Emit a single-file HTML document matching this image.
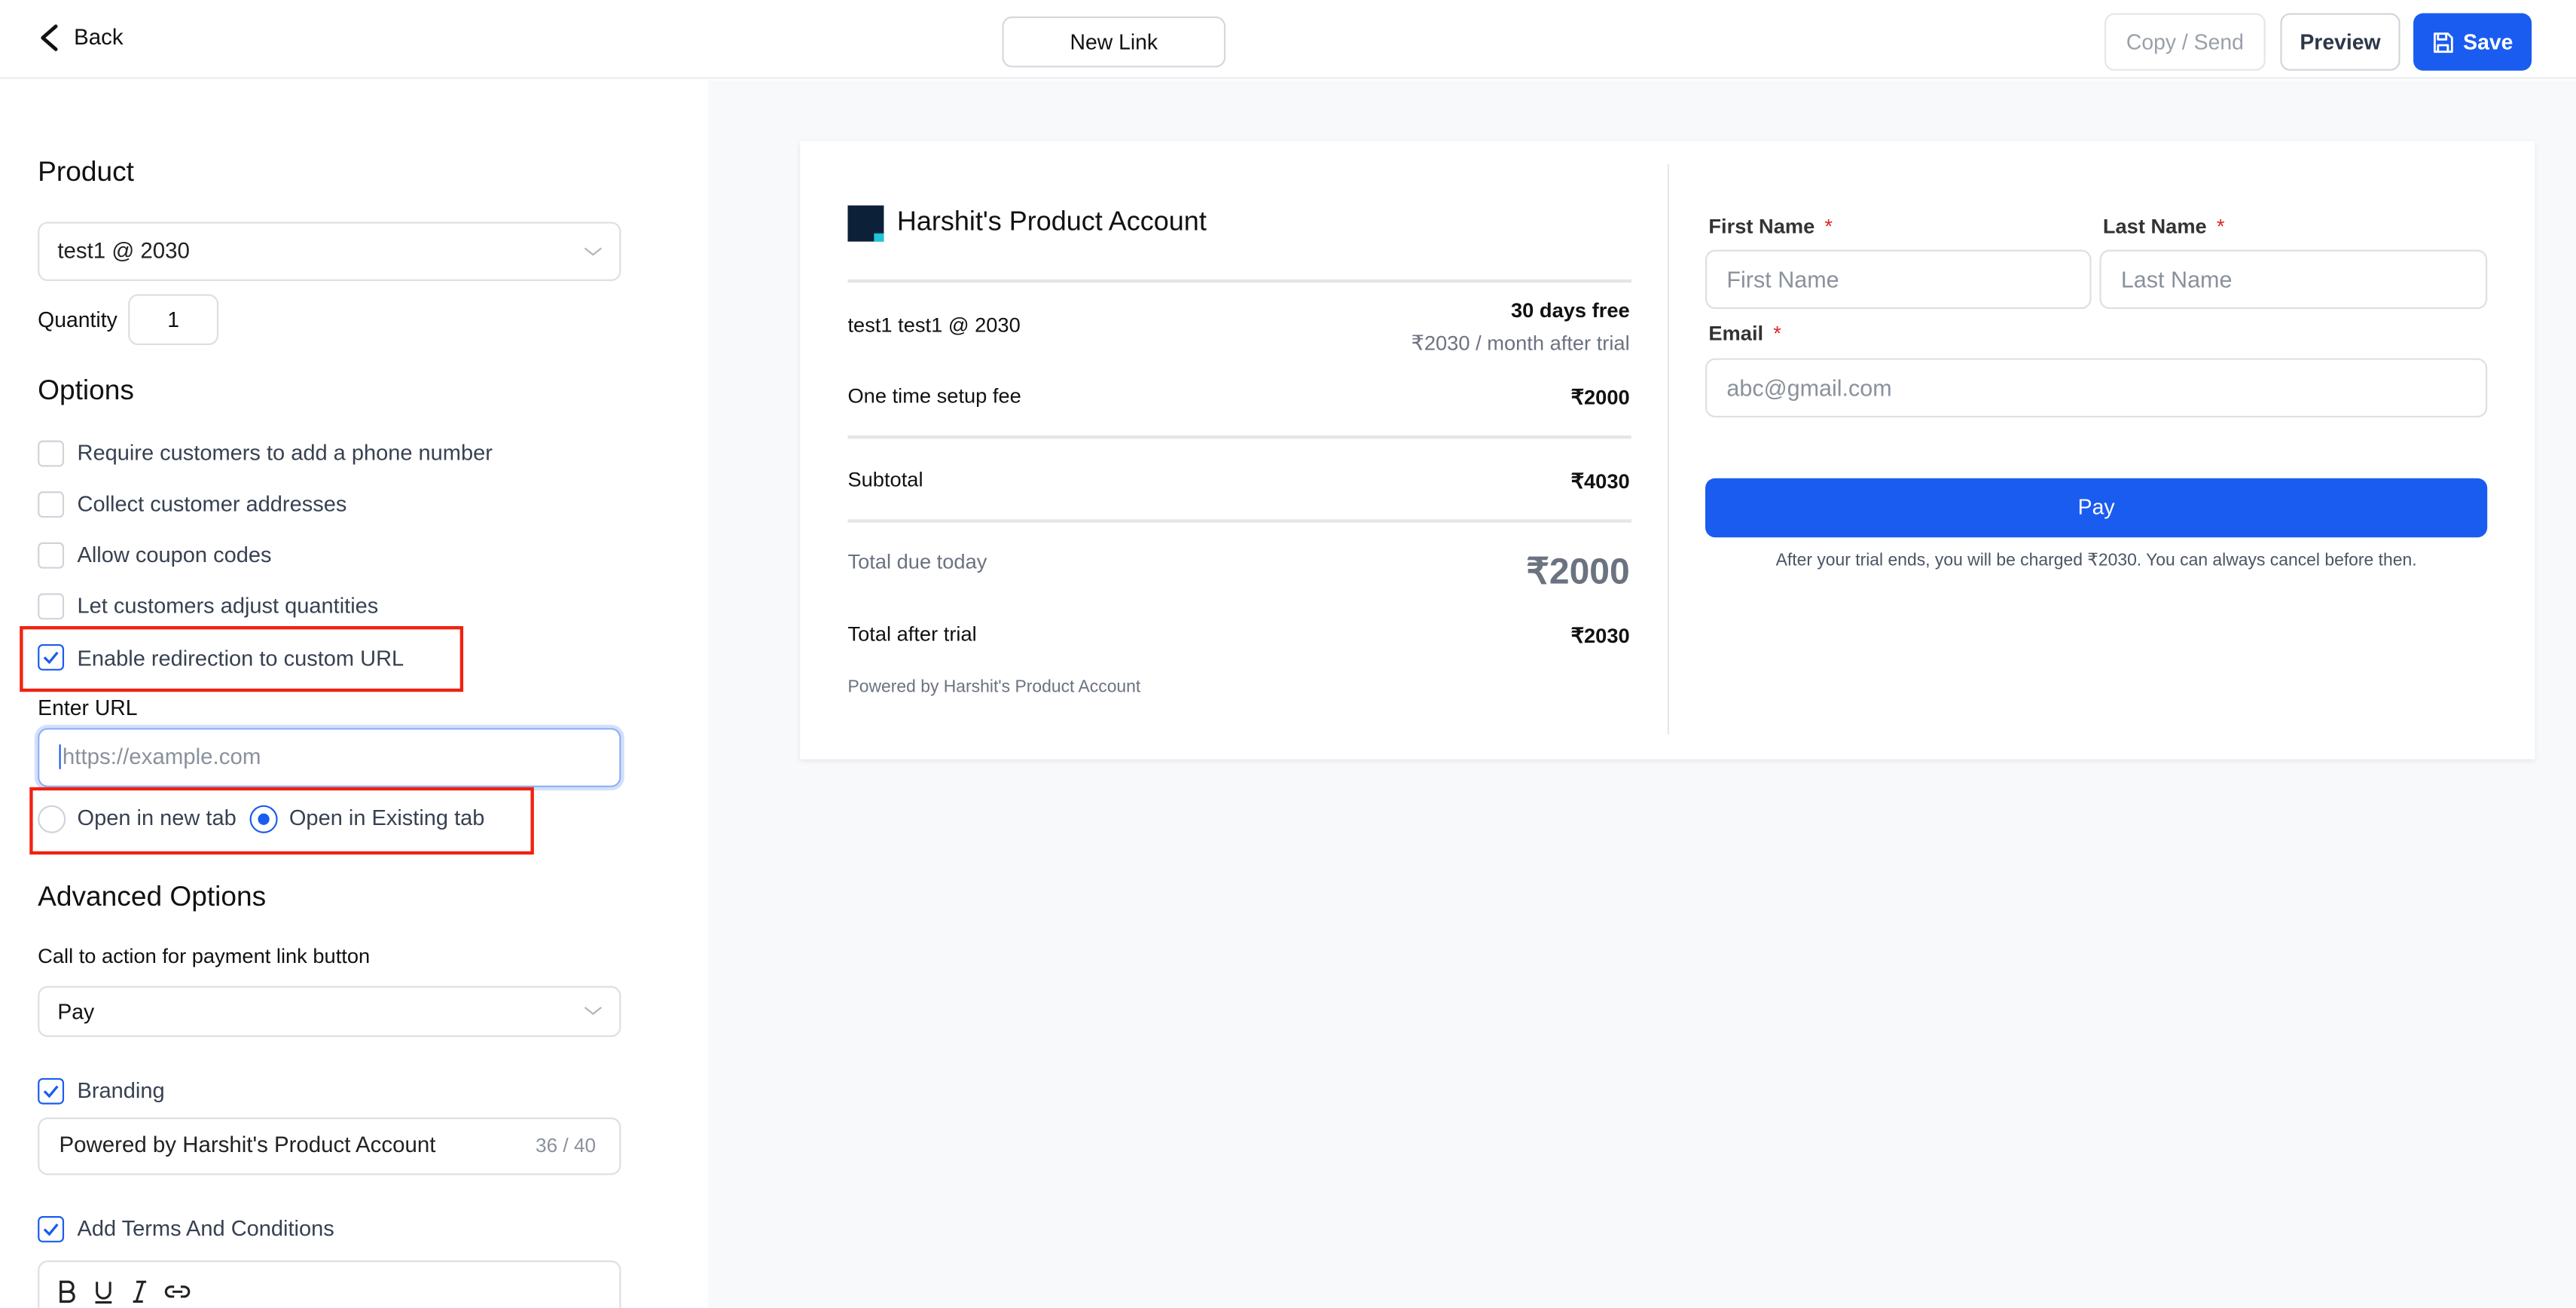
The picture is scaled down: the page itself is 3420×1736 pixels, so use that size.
<!DOCTYPE html>
<html><head><meta charset="utf-8"><style>
*{box-sizing:border-box;margin:0;padding:0}
html,body{width:3420px;height:1736px;overflow:hidden;background:#fff}
#w{position:absolute;left:0;top:0;width:1568px;height:796px;overflow:hidden;transform:scale(2.18112);transform-origin:0 0;font-family:"Liberation Sans",sans-serif;color:#111}
.a{position:absolute}
.top{left:0;top:0;width:1568px;height:48px;border-bottom:1px solid #e9ebef;background:#fff}
.btn{position:absolute;top:8px;height:35px;border-radius:6px;font-size:13px;display:flex;align-items:center;justify-content:center}
.right{left:431px;top:49px;width:1137px;height:747px;background:#f8f9fb}
.h{font-size:17px;color:#111}
.box{position:absolute;border:1px solid #dcdfe4;border-radius:6px;background:#fff}
.cb{position:absolute;left:23px;width:16px;height:16px;border:1px solid #cfd3da;border-radius:3px;background:#fff}
.cbc{border-color:#1a5cf0}
.lbl{position:absolute;left:47px;font-size:13.3px;color:#374151}
.red{position:absolute;border:2px solid #f0220f}
.card{left:487px;top:86px;width:1056px;height:376px;background:#fff;box-shadow:0 1px 3px rgba(0,0,0,.08)}
.t{position:absolute;font-size:12.5px;color:#111}
.r{text-align:right}
.ln{position:absolute;left:516px;width:477px;height:2px;background:#e3e5e9}
.fl{position:absolute;font-size:12.5px;font-weight:bold;color:#333}
.fl b{color:#e02424;font-weight:normal;margin-left:6px}
.in{position:absolute;height:36px;border:1px solid #dcdfe4;border-radius:6px;background:#fff;font-size:14px;color:#8a919c;padding-left:12px;line-height:34px}
</style></head><body><div id="w">
<div class="a top"></div>
<svg class="a" style="left:22px;top:14px" width="16" height="18" viewBox="0 0 16 18"><path d="M12 2 L4 9 L12 16" fill="none" stroke="#111" stroke-width="2.2" stroke-linecap="round" stroke-linejoin="round"/></svg>
<div class="a" style="left:45px;top:15px;font-size:13.5px">Back</div>
<div class="btn" style="left:610px;top:10px;width:136px;height:31px;border:1px solid #d5d8de;font-size:13px">New Link</div>
<div class="btn" style="left:1281px;width:98px;border:1px solid #e4e6ea;color:#9aa0a9">Copy / Send</div>
<div class="btn" style="left:1388px;width:73px;border:1px solid #d1d5db;color:#2d3748;font-weight:bold">Preview</div>
<div class="btn" style="left:1469px;width:72px;background:#1a5cf0;color:#fff;font-weight:bold"><svg width="14" height="14" viewBox="0 0 14 14" style="margin-right:5px"><path d="M2 1.5h8l2.5 2.5v8.5h-10.5z M4 1.5v3.5h5v-3.5 M4 12.5v-4h6v4" fill="none" stroke="#fff" stroke-width="1.3" stroke-linejoin="round"/></svg>Save</div>
<div class="a right"></div>

<div class="a h" style="left:23px;top:95px">Product</div>
<div class="box" style="left:23px;top:135px;width:355px;height:36px"></div>
<div class="a" style="left:35px;top:145px;font-size:13.5px;color:#222">test1 @ 2030</div>
<svg class="a" style="left:355px;top:149px" width="12" height="8"><path d="M1 2l5 4 5-4" fill="none" stroke="#b0b5bd" stroke-width="1"/></svg>
<div class="a" style="left:23px;top:187px;font-size:13px">Quantity</div>
<div class="box" style="left:78px;top:179px;width:55px;height:31px;text-align:center;line-height:29px;font-size:13px">1</div>
<div class="a h" style="left:23px;top:228px">Options</div>

<div class="cb" style="top:268px"></div><div class="lbl" style="top:268px">Require customers to add a phone number</div>
<div class="cb" style="top:299px"></div><div class="lbl" style="top:299px">Collect customer addresses</div>
<div class="cb" style="top:330px"></div><div class="lbl" style="top:330px">Allow coupon codes</div>
<div class="cb" style="top:361px"></div><div class="lbl" style="top:361px">Let customers adjust quantities</div>
<div class="cb cbc" style="top:392px"><svg width="14" height="14" style="position:absolute;left:0;top:0"><path d="M3 7l3 3 5-6" fill="none" stroke="#1a5cf0" stroke-width="1.5"/></svg></div><div class="lbl" style="top:393px">Enable redirection to custom URL</div>
<div class="red" style="left:12px;top:381px;width:270px;height:40px"></div>
<div class="a" style="left:23px;top:423px;font-size:13px">Enter URL</div>
<div class="a" style="left:21px;top:441px;width:359px;height:40px;border-radius:8px;background:#d3e0fb"></div>
<div class="a" style="left:23px;top:443px;width:355px;height:36px;border:1px solid #8cb0f5;border-radius:6px;background:#fff;font-size:13.5px;color:#8a919c;padding-left:12px;line-height:34px"><span style="border-left:1px solid #1a5cf0;margin-right:1px"></span>https://example.com</div>
<div class="a" style="left:23px;top:490px;width:17px;height:17px;border:1px solid #cfd3da;border-radius:50%"></div>
<div class="lbl" style="top:490px">Open in new tab</div>
<div class="a" style="left:152px;top:490px;width:17px;height:17px;border:1px solid #1a5cf0;border-radius:50%"><div style="margin:4px;width:7px;height:7px;border-radius:50%;background:#1a5cf0"></div></div>
<div class="lbl" style="left:176px;top:490px">Open in Existing tab</div>
<div class="red" style="left:18px;top:479px;width:307px;height:41px"></div>

<div class="a h" style="left:23px;top:536px">Advanced Options</div>
<div class="a" style="left:23px;top:575px;font-size:12.5px">Call to action for payment link button</div>
<div class="box" style="left:23px;top:600px;width:355px;height:31px"></div>
<div class="a" style="left:35px;top:608px;font-size:13px">Pay</div>
<svg class="a" style="left:355px;top:611px" width="12" height="8"><path d="M1 2l5 4 5-4" fill="none" stroke="#b0b5bd" stroke-width="1"/></svg>
<div class="cb cbc" style="top:656px"><svg width="14" height="14" style="position:absolute;left:0;top:0"><path d="M3 7l3 3 5-6" fill="none" stroke="#1a5cf0" stroke-width="1.5"/></svg></div><div class="lbl" style="top:656px">Branding</div>
<div class="box" style="left:23px;top:680px;width:355px;height:35px"></div>
<div class="a" style="left:36px;top:689px;font-size:13.5px;color:#222">Powered by Harshit's Product Account</div>
<div class="a" style="left:326px;top:690px;font-size:12px;color:#8a919c">36 / 40</div>
<div class="cb cbc" style="top:740px"><svg width="14" height="14" style="position:absolute;left:0;top:0"><path d="M3 7l3 3 5-6" fill="none" stroke="#1a5cf0" stroke-width="1.5"/></svg></div><div class="lbl" style="top:740px">Add Terms And Conditions</div>
<div class="box" style="left:23px;top:767px;width:355px;height:50px"></div>
<svg class="a" style="left:34px;top:778px" width="85" height="16" viewBox="0 0 85 16">
<path d="M3 2h4.5a3 3 0 0 1 0 6H3z M3 8h5a3 3 0 0 1 0 6H3z" fill="none" stroke="#222" stroke-width="1.5"/>
<path d="M25 2v6a4 4 0 0 0 8 0V2 M24 14.5h10" fill="none" stroke="#222" stroke-width="1.4"/>
<path d="M49 2h6 M47 14h6 M53 2l-4 12" fill="none" stroke="#222" stroke-width="1.4"/>
<path d="M71 8h6 M72 5h-2a3 3 0 0 0 0 6h2 M76 5h2a3 3 0 0 1 0 6h-2" fill="none" stroke="#222" stroke-width="1.4"/>
</svg>

<div class="a card"></div>
<div class="a" style="left:1015px;top:100px;width:1px;height:347px;background:#e5e7eb"></div>
<div class="a" style="left:516px;top:125px;width:22px;height:22px;background:#0c2038"><div style="position:absolute;right:0;bottom:0;width:6px;height:5px;background:#1fc4d8"></div></div>
<div class="a" style="left:546px;top:126px;font-size:16.5px">Harshit's Product Account</div>
<div class="ln" style="top:170px"></div>
<div class="t" style="left:516px;top:191px">test1 test1 @ 2030</div>
<div class="t r" style="top:182px;font-weight:bold;right:576px">30 days free</div>
<div class="t r" style="top:201px;color:#6b7280;right:576px">₹2030 / month after trial</div>
<div class="t" style="left:516px;top:234px">One time setup fee</div>
<div class="t r" style="top:234px;font-weight:bold;right:576px">₹2000</div>
<div class="ln" style="top:265px"></div>
<div class="t" style="left:516px;top:285px">Subtotal</div>
<div class="t r" style="top:285px;font-weight:bold;right:576px">₹4030</div>
<div class="ln" style="top:316px"></div>
<div class="t" style="left:516px;top:335px;color:#6b7280">Total due today</div>
<div class="t r" style="top:335px;font-size:22px;font-weight:bold;color:#6b7280;right:576px">₹2000</div>
<div class="t" style="left:516px;top:379px">Total after trial</div>
<div class="t r" style="top:379px;font-weight:bold;right:576px">₹2030</div>
<div class="t" style="left:516px;top:412px;font-size:10.5px;color:#6b7280">Powered by Harshit's Product Account</div>

<div class="fl" style="left:1040px;top:131px">First Name<b>*</b></div>
<div class="fl" style="left:1280px;top:131px">Last Name<b>*</b></div>
<div class="in" style="left:1038px;top:152px;width:235px">First Name</div>
<div class="in" style="left:1278px;top:152px;width:236px">Last Name</div>
<div class="fl" style="left:1040px;top:196px">Email<b>*</b></div>
<div class="in" style="left:1038px;top:218px;width:476px">abc@gmail.com</div>
<div class="a" style="left:1038px;top:291px;width:476px;height:36px;background:#1a5cf0;border-radius:6px;color:#fff;font-size:13px;text-align:center;line-height:36px">Pay</div>
<div class="a" style="left:1038px;top:335px;width:476px;text-align:center;font-size:10.5px;color:#4b5563">After your trial ends, you will be charged ₹2030. You can always cancel before then.</div>
</div></body></html>
